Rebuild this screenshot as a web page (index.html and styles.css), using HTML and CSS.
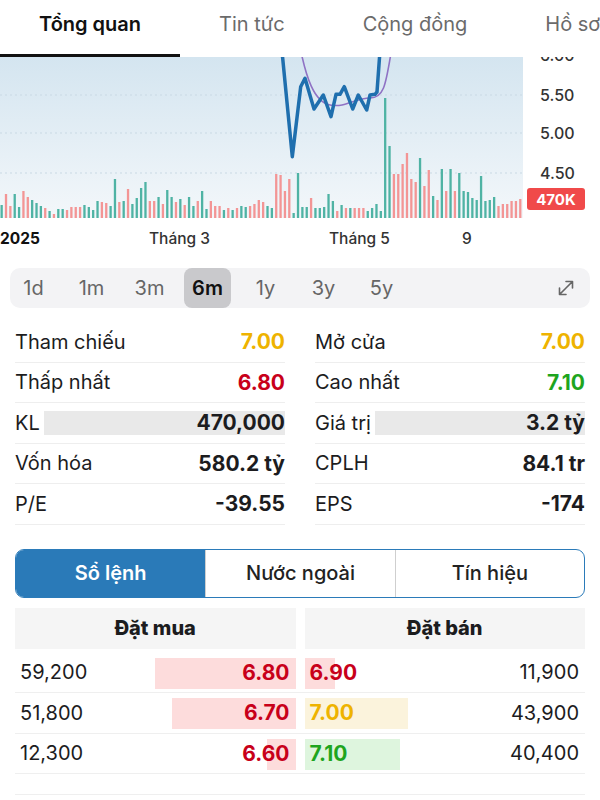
FILE: index.html
```html
<!DOCTYPE html>
<html lang="vi">

<head>
    <meta charset="UTF-8">
    <meta name="viewport" content="width=device-width, initial-scale=1.0">
    <title>Tổng quan</title>
    <link rel="stylesheet" href="styles.css">
</head>

<body>
    <nav class="tabs">
        <div class="tab active">Tổng quan</div>
        <div class="tab">Tin tức</div>
        <div class="tab">Cộng đồng</div>
        <div class="tab">Hồ sơ</div>
    </nav>

    <div class="chart">
        <svg id="chart" width="600" height="198" viewBox="0 0 600 198">
            <defs>
                <linearGradient id="bg" x1="0" y1="0" x2="0" y2="1">
                    <stop offset="0" stop-color="#d4e5f0" />
                    <stop offset="1" stop-color="#f3f7fa" />
                </linearGradient>
                <clipPath id="plot">
                    <rect x="0" y="0" width="523" height="161" />
                </clipPath>
            </defs>
            <rect x="0" y="0" width="523" height="161" fill="url(#bg)" />
            <g class="grid">
                <line x1="0" y1="38" x2="523" y2="38" />
                <line x1="0" y1="76" x2="523" y2="76" />
                <line x1="0" y1="116" x2="523" y2="116" />
            </g>
            <g id="bars" clip-path="url(#plot)"></g>
            <g clip-path="url(#plot)">
                <path class="ma" d="M300,-10 C306,20 314,45 330,48 S355,41 370,41 S386,25 392,-10" />
                <path class="price" d="M280,-20 L282.7,1.3 L292.3,99.7 L300.7,29.7 L305,21.3 L314,52 L323.3,38 L331,59.7 L336,37.3 L340,37.3 L344.3,29.7 L352.7,52 L358.3,38 L366.7,53 L370,38 L375,37.3 L377,35 L381,-20" />
            </g>
            <g class="yaxis">
                <text x="540" y="4">6.00</text>
                <text x="540" y="44">5.50</text>
                <text x="540" y="82">5.00</text>
                <text x="540" y="122">4.50</text>
            </g>
            <rect class="badge" x="527" y="131" width="58" height="22" rx="3" />
            <text class="badge-text" x="556" y="148">470K</text>
            <g class="xaxis">
                <text class="year" x="0" y="187">2025</text>
                <text x="149" y="187">Tháng 3</text>
                <text x="329" y="187">Tháng 5</text>
                <text x="462" y="187">9</text>
            </g>
        </svg>
    </div>

    <div class="ranges">
        <div class="range">1d</div>
        <div class="range">1m</div>
        <div class="range">3m</div>
        <div class="range on">6m</div>
        <div class="range">1y</div>
        <div class="range">3y</div>
        <div class="range">5y</div>
        <svg class="expand" width="20" height="20" viewBox="0 0 20 20">
            <path d="M3.5 16.5 L16.5 3.5 M10 3.5 L16.5 3.5 L16.5 10 M3.5 10 L3.5 16.5 L10 16.5" />
        </svg>
    </div>

    <div class="stats">
        <div class="stat"><span>Tham chiếu</span><b class="ref">7.00</b></div>
        <div class="stat"><span>Mở cửa</span><b class="ref">7.00</b></div>
        <div class="stat"><span>Thấp nhất</span><b class="down">6.80</b></div>
        <div class="stat"><span>Cao nhất</span><b class="up">7.10</b></div>
        <div class="stat"><span>KL</span><b class="fill">470,000</b></div>
        <div class="stat"><span>Giá trị</span><b class="fill">3.2 tỷ</b></div>
        <div class="stat"><span>Vốn hóa</span><b>580.2 tỷ</b></div>
        <div class="stat"><span>CPLH</span><b>84.1 tr</b></div>
        <div class="stat"><span>P/E</span><b>-39.55</b></div>
        <div class="stat"><span>EPS</span><b>-174</b></div>
    </div>

    <div class="segments">
        <div class="seg on">Sổ lệnh</div>
        <div class="seg">Nước ngoài</div>
        <div class="seg">Tín hiệu</div>
    </div>

    <div class="book">
        <div class="book-head">
            <div>Đặt mua</div>
            <div>Đặt bán</div>
        </div>
        <div class="book-row">
            <div class="bid"><span class="bar down-bg" style="width: 50%"></span><span>59,200</span><b class="down">6.80</b></div>
            <div class="ask"><span class="bar down-bg" style="width: 11%"></span><b class="down">6.90</b><span>11,900</span></div>
        </div>
        <div class="book-row">
            <div class="bid"><span class="bar down-bg" style="width: 44%"></span><span>51,800</span><b class="down">6.70</b></div>
            <div class="ask"><span class="bar ref-bg" style="width: 37%"></span><b class="ref">7.00</b><span>43,900</span></div>
        </div>
        <div class="book-row">
            <div class="bid"><span class="bar down-bg" style="width: 10%"></span><span>12,300</span><b class="down">6.60</b></div>
            <div class="ask"><span class="bar up-bg" style="width: 34%"></span><b class="up">7.10</b><span>40,400</span></div>
        </div>
        <div class="book-foot"></div>
    </div>

    <script>
        // khối lượng theo phiên: [chiều cao, màu] (g = tăng, r = giảm)
        var vol = [
            [13, 'g'], [24, 'r'], [12, 'r'], [24, 'g'], [11, 'g'], [27, 'r'], [21, 'r'], [18, 'g'], [15, 'g'], [12, 'g'],
            [10, 'r'], [7, 'g'], [4, 'r'], [9, 'g'], [9, 'g'], [8, 'r'], [11, 'r'], [11, 'r'], [11, 'r'], [13, 'g'],
            [11, 'g'], [8, 'g'], [17, 'g'], [16, 'r'], [15, 'r'], [12, 'g'], [39, 'g'], [16, 'r'], [17, 'g'], [29, 'r'],
            [14, 'g'], [20, 'g'], [30, 'g'], [36, 'g'], [17, 'r'], [17, 'r'], [21, 'g'], [14, 'r'], [28, 'g'], [21, 'g'],
            [16, 'r'], [19, 'g'], [13, 'r'], [21, 'g'], [12, 'g'], [17, 'r'], [27, 'g'], [9, 'g'], [17, 'r'], [12, 'r'],
            [12, 'r'], [8, 'g'], [10, 'r'], [8, 'g'], [10, 'r'], [12, 'g'], [11, 'g'], [12, 'r'], [14, 'r'], [18, 'r'],
            [16, 'r'], [12, 'g'], [10, 'g'], [44, 'r'], [43, 'r'], [27, 'r'], [39, 'r'], [5, 'g'], [45, 'g'], [11, 'g'],
            [11, 'g'], [20, 'r'], [10, 'g'], [10, 'g'], [11, 'g'], [24, 'g'], [17, 'g'], [7, 'r'], [13, 'g'], [10, 'r'],
            [10, 'g'], [10, 'r'], [10, 'r'], [10, 'r'], [7, 'g'], [10, 'g'], [14, 'g'], [7, 'g'], [120, 'g'], [72, 'g'],
            [44, 'r'], [44, 'r'], [54, 'r'], [65, 'r'], [39, 'r'], [36, 'r'], [60, 'g'], [32, 'r'], [48, 'r'], [22, 'g'],
            [18, 'r'], [49, 'g'], [27, 'r'], [49, 'g'], [27, 'r'], [45, 'g'], [27, 'g'], [26, 'g'], [20, 'g'], [18, 'g'],
            [42, 'g'], [17, 'g'], [18, 'g'], [21, 'g'], [12, 'r'], [14, 'r'], [14, 'r'], [17, 'r'], [17, 'r'], [19, 'r']
        ]
        var g = document.getElementById('bars')
        var step = 523 / vol.length
        for (var i = 0; i < vol.length; i++) {
            var r = document.createElementNS('http://www.w3.org/2000/svg', 'rect')
            r.setAttribute('x', (i * step + 0.5).toFixed(2))
            r.setAttribute('y', 161 - vol[i][0])
            r.setAttribute('width', 2.3)
            r.setAttribute('height', vol[i][0])
            r.setAttribute('class', vol[i][1] == 'g' ? 'vup' : 'vdown')
            g.appendChild(r)
        }
    </script>
</body>

</html>
```

FILE: styles.css
```css
* {
    margin: 0;
    padding: 0;
    box-sizing: border-box;
}

body {
    width: 600px;
    font-family: "Inter", "Noto Sans", sans-serif;
    color: #1c1c1e;
    background: #fff;
    overflow: hidden;
}

/* tabs */
.tabs {
    display: flex;
    height: 57px;
    white-space: nowrap;
    overflow: hidden;
}

.tab {
    display: flex;
    align-items: center;
    padding: 0 39px 6px;
    font-size: 20px;
    color: #6b6b6b;
    border-bottom: 3px solid transparent;
}

.tab.active {
    color: #111;
    font-weight: 600;
    border-bottom-color: #111;
}

/* chart */
.chart {
    height: 198px;
}

.chart svg {
    display: block;
}

.grid line {
    stroke: #c9d9e4;
    stroke-width: 1;
    stroke-dasharray: 2 3;
}

.vup {
    fill: #4fb3a4;
}

.vdown {
    fill: #f39595;
}

.price {
    fill: none;
    stroke: #1f6fae;
    stroke-width: 3.5;
    stroke-linejoin: round;
}

.ma {
    fill: none;
    stroke: #8f72c4;
    stroke-width: 1.6;
}

.yaxis text {
    font-size: 16px;
    font-weight: 500;
    fill: #333;
}

.badge {
    fill: #f04a4a;
}

.badge-text {
    font-size: 15px;
    font-weight: 700;
    fill: #fff;
    text-anchor: middle;
}

.xaxis text {
    font-size: 15.5px;
    font-weight: 500;
    fill: #333;
}

.xaxis .year {
    font-weight: 700;
    fill: #111;
}

/* ranges */
.ranges {
    display: flex;
    align-items: center;
    gap: 11px;
    height: 40px;
    margin: 13px 10px 0;
    background: #f3f3f5;
    border-radius: 10px;
}

.range {
    width: 47px;
    height: 40px;
    line-height: 40px;
    text-align: center;
    font-size: 20px;
    color: #666;
    border-radius: 8px;
}

.range.on {
    background: #c9c9cc;
    color: #111;
    font-weight: 600;
}

.expand {
    margin-left: auto;
    margin-right: 14px;
    fill: none;
    stroke: #666;
    stroke-width: 1.6;
    stroke-linecap: round;
    stroke-linejoin: round;
}

/* stats */
.stats {
    display: grid;
    grid-template-columns: 1fr 1fr;
    column-gap: 30px;
    margin: 14px 15px 0;
}

.stat {
    display: flex;
    justify-content: space-between;
    align-items: center;
    height: 40.5px;
    font-size: 20px;
    border-bottom: 1px solid #eeeeee;
}

.stat b {
    font-size: 21px;
    font-weight: 700;
}

.stat .fill {
    flex: 1;
    margin-left: 4px;
    height: 24px;
    line-height: 24px;
    text-align: right;
    background: #e9e9e9;
}

.ref {
    color: #eeb300;
}

.down {
    color: #c8001a;
}

.up {
    color: #1ea51e;
}

/* segmented control */
.segments {
    display: grid;
    grid-template-columns: 1fr 1fr 1fr;
    height: 49px;
    margin: 24px 15px 0;
    border: 1.5px solid #2b7bb9;
    border-radius: 9px;
    overflow: hidden;
}

.seg {
    display: flex;
    justify-content: center;
    align-items: center;
    font-size: 20px;
    font-weight: 500;
    color: #222;
    border-left: 1px solid #cfcfcf;
}

.seg:first-child {
    border-left: none;
}

.seg.on {
    background: #2a7ab8;
    color: #fff;
    font-weight: 600;
}

/* order book */
.book {
    margin: 10px 15px 0;
}

.book-head {
    display: grid;
    grid-template-columns: 1fr 1fr;
    gap: 9px;
    margin-bottom: 4px;
}

.book-head div {
    height: 41px;
    line-height: 41px;
    text-align: center;
    font-size: 20px;
    font-weight: 800;
    background: #f5f5f5;
}

.book-row {
    display: grid;
    grid-template-columns: 1fr 1fr;
    gap: 9px;
    height: 40.5px;
    border-bottom: 1px solid #efefef;
}

.bid,
.ask {
    position: relative;
    display: flex;
    justify-content: space-between;
    align-items: center;
    font-size: 20px;
    padding: 0 6px 0 5px;
}

.bid b,
.ask b {
    font-size: 21px;
    font-weight: 700;
}

.bid span,
.bid b,
.ask span,
.ask b {
    position: relative;
}

.bid .bar,
.ask .bar {
    position: absolute;
    top: 5px;
    height: 31px;
}

.bid .bar {
    right: 0;
}

.ask .bar {
    left: 0;
}

.down-bg {
    background: #fddcdc;
}

.ref-bg {
    background: #fbf3dc;
}

.up-bg {
    background: #def5de;
}

.book-foot {
    height: 21px;
    border-bottom: 1px solid #efefef;
}
```
